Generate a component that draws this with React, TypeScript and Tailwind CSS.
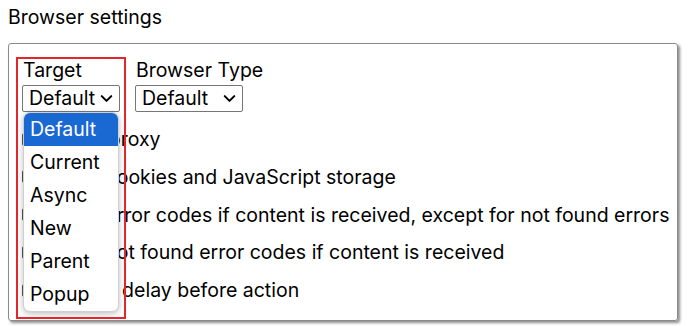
import { ChevronDown } from "lucide-react";

const targets = ["Default", "Current", "Async", "New", "Parent", "Popup"];

const options = [
  "Enable proxy",
  "Delete cookies and JavaScript storage",
  "Ignore error codes if content is received, except for not found errors",
  "Ignore not found error codes if content is received",
  "Random delay before action",
];

const FakeSelect = ({ value, width }: { value: string; width: string }) => {
  return (
    <div
      className={`${width} h-[27px] flex items-center justify-between pl-[6px] pr-[3px] border border-[#767676] rounded-[2px] bg-white`}
    >
      <span className="leading-none">{value}</span>
      <ChevronDown className="w-[19px] h-[19px]" strokeWidth={2.6} />
    </div>
  );
};

export default function App() {
  return (
    <div className="relative w-[690px] h-[326px] bg-white text-black text-[19.5px] font-['Inter','Liberation_Sans',sans-serif]">
      <div className="pl-2 pt-[6px] leading-[22px]">Browser settings</div>

      <div className="mt-[15px] ml-2 w-[670px] border border-[#8a8a8a] rounded-[3px] shadow-[2px_2px_3px_rgba(0,0,0,0.45)] pl-[13px] pt-[15px] pb-[19px]">
        <div className="flex gap-[15px]">
          <div className="relative flex flex-col gap-[4px]">
            <span className="leading-[22px] pl-px">Target</span>
            <FakeSelect value="Default" width="w-[98px]" />

            {/* open list */}
            <div className="absolute left-[1px] top-[53px] z-20 w-[96px] bg-white rounded-[7px] border border-[#d0d0d0] shadow-[0_2px_6px_rgba(0,0,0,0.25)] overflow-hidden">
              {targets.map((t, i) => (
                <div
                  key={t}
                  className={`h-[33px] flex items-center pl-[6px] ${
                    i === 0 ? "bg-[#1a68d2] text-white" : ""
                  }`}
                >
                  {t}
                </div>
              ))}
            </div>
          </div>
          <div className="flex flex-col gap-[4px]">
            <span className="leading-[22px] pl-px">Browser Type</span>
            <FakeSelect value="Default" width="w-[108px]" />
          </div>
        </div>

        <div className="mt-[16px] flex flex-col gap-[15.8px]">
          {options.map((o) => (
            <div key={o} className="flex items-center leading-[22px]">
              <span className="w-[13px] h-[13px] border border-[#555] rounded-[2px] mr-[6px] shrink-0" />
              <span>{o}</span>
            </div>
          ))}
        </div>
      </div>

      {/* annotation */}
      <div className="absolute left-[16px] top-[57px] w-[110px] h-[262px] border-2 border-[#e3262b] z-30 pointer-events-none" />
    </div>
  );
}
